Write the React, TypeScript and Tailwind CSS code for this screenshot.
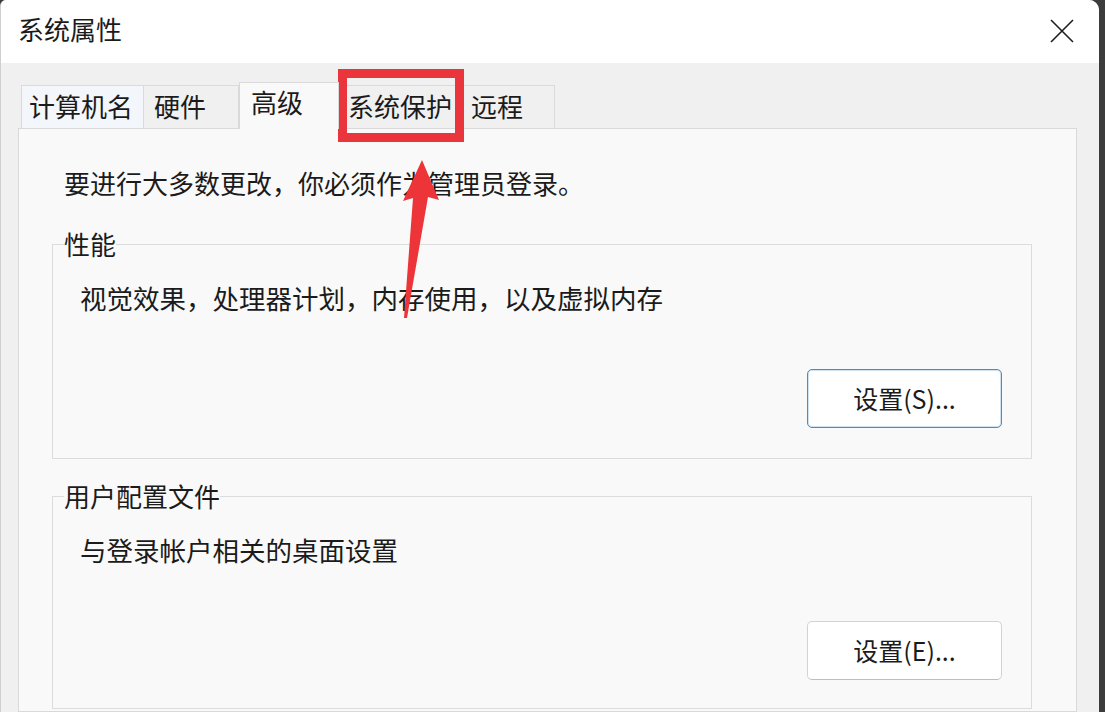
import React from "react";

const font = { fontFamily: '"Noto Sans CJK SC", "Microsoft YaHei", sans-serif' };

function Tab({ label, width, selected, pl, bg }: { label: string; width: number; selected?: boolean; pl: number; bg?: string }) {
  if (selected) {
    return (
      <div
        className="relative z-10 -mb-px h-[47px] border border-b-0 border-[#d9d9d9] bg-[#f9f9f9] flex items-start pt-[1px] text-[26px] leading-[36px] text-[#1b1b1b]"
        style={{ width, paddingLeft: pl }}
      >
        {label}
      </div>
    );
  }
  return (
    <div
      className={`h-[43px] border border-b-0 border-[#dadada] flex items-center pb-[3px] text-[26px] leading-[36px] text-[#1b1b1b] -ml-px first:ml-0 ${bg ?? "bg-[#f0f0f0]"}`}
      style={{ width, paddingLeft: pl }}
    >
      {label}
    </div>
  );
}

function Group({ legend, text, button, primary, last }: { legend: string; text: string; button: string; primary?: boolean; last?: boolean }) {
  return (
    <fieldset className={`border border-[#dcdcdc] px-[11px] flex flex-col ${last ? "pb-[28px] mt-[19px]" : "pb-[30px] mt-[25px]"} pr-[29px]`}>
      <legend className="px-0 text-[26px] leading-[36px] text-[#1b1b1b]">{legend}</legend>
      <div className="mt-[18px] ml-[16px] text-[26.5px] leading-[36px] text-[#1b1b1b]">{text}</div>
      <button
        className={`self-end mt-[53px] w-[195px] h-[59px] rounded-[5px] bg-white text-[25px] text-[#1b1b1b] leading-none flex items-center justify-center border ${
          primary ? "border-[#4d8cbf] shadow-[inset_0_0_0_1px_#cfe2f1]" : "border-[#d3d3d3] border-b-[#bdbdbd]"
        }`}
        style={font}
      >
        {button}
      </button>
    </fieldset>
  );
}

export default function App() {
  return (
    <div className="relative w-[1105px] h-[712px] overflow-hidden bg-[#3c3c3c] flex" style={font}>
      <div className="w-[1099px] h-full bg-[#f0f0f0] rounded-tr-[10px] rounded-tl-[6px] overflow-hidden flex flex-col border-l border-[#cfcfcf]">
        <div className="h-[63px] shrink-0 bg-white flex items-center justify-between pl-[17px] pr-[25px]">
          <span className="text-[26px] leading-none text-[#1b1b1b] -mt-[6px]">系统属性</span>
          <svg width="24" height="24" viewBox="0 0 24 24" className="-mt-[2px]">
            <path d="M1 1 L23 23 M23 1 L1 23" stroke="#1e1e1e" strokeWidth="1.6" fill="none" />
          </svg>
        </div>
        <div className="flex flex-col flex-1 pl-[17px]">
          <div className="mt-[19px] h-[46px] flex items-end pl-[3px] shrink-0">
            <Tab label="计算机名" width={123} pl={7} bg="bg-[#f3f6fa]" />
            <Tab label="硬件" width={96} pl={10} />
            <Tab label="高级" width={100} pl={11} selected />
            <Tab label="系统保护" width={125} pl={9} />
            <Tab label="远程" width={93} pl={8} />
          </div>
          <div className="w-[1059px] flex-1 border border-[#d9d9d9] bg-[#f9f9f9] pl-[33px] pr-[44px] flex flex-col">
            <p className="mt-[36px] ml-[12px] text-[26px] leading-[36px] text-[#1b1b1b]">要进行大多数更改，你必须作为管理员登录。</p>
            <Group legend="性能" text="视觉效果，处理器计划，内存使用，以及虚拟内存" button="设置(S)..." primary />
            <Group legend="用户配置文件" text="与登录帐户相关的桌面设置" button="设置(E)..." last />
          </div>
        </div>
      </div>

      <div className="absolute left-[338px] top-[69px] w-[126px] h-[73px] border-[9px] border-[#e9353b] pointer-events-none" />
      <svg className="absolute left-0 top-0 pointer-events-none" width="1105" height="712" viewBox="0 0 1105 712">
        <polygon points="422,160 439,200 428,197 407,318 404,318 413,198 403,201" fill="#ec3439" />
      </svg>
    </div>
  );
}
